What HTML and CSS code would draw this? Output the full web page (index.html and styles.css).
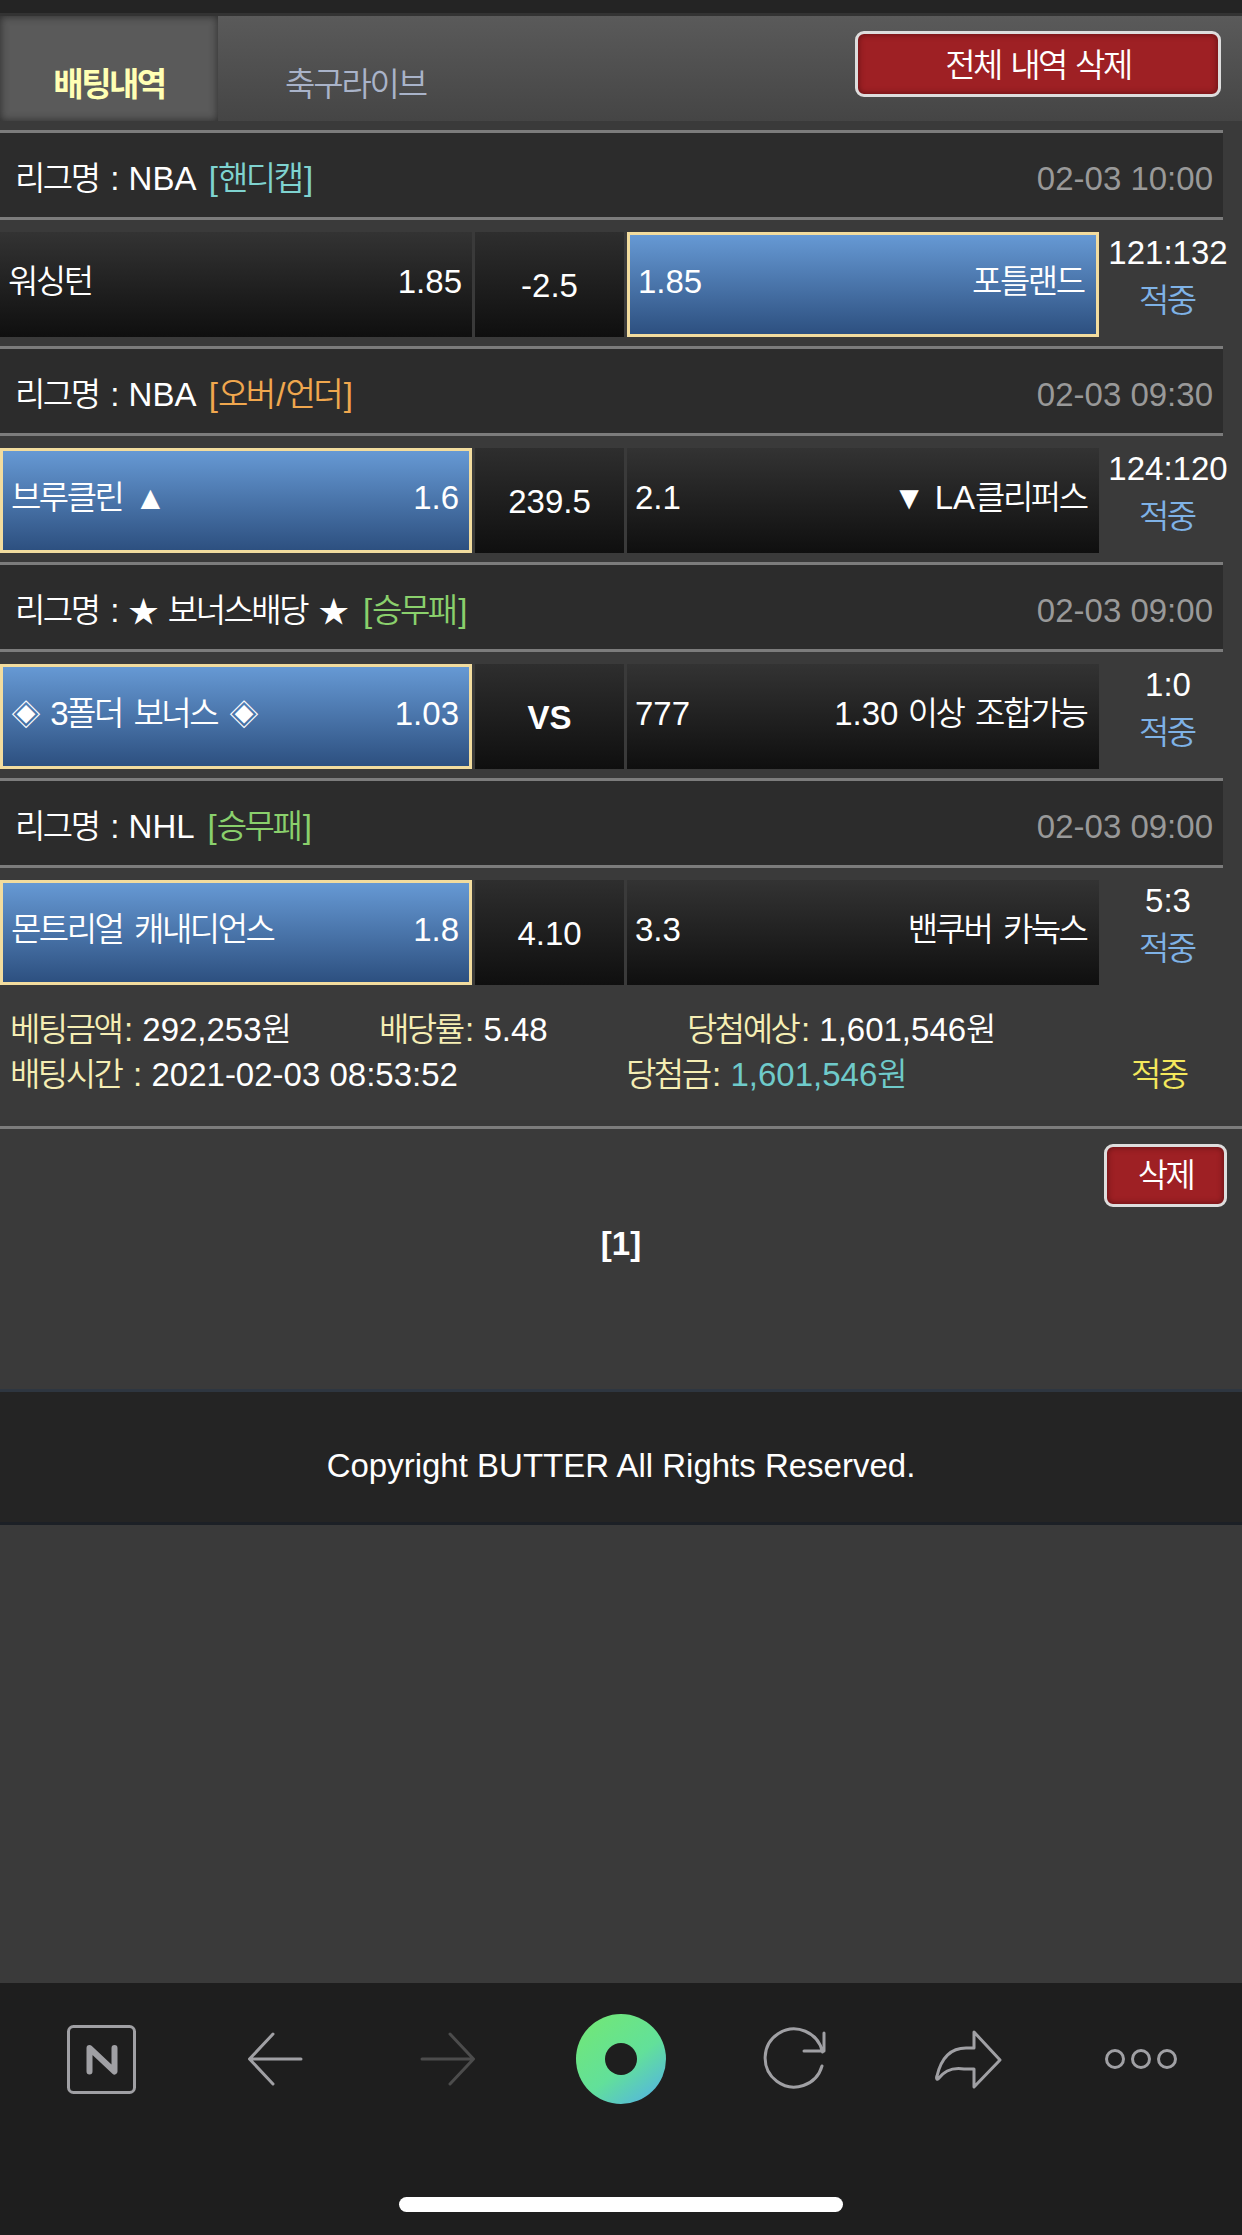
FILE: index.html
```html
<!DOCTYPE html>
<html lang="ko">
<head>
    <meta charset="UTF-8">
    <meta name="viewport" content="width=device-width, initial-scale=1.0">
    <title>배팅내역</title>
    <link rel="stylesheet" href="styles.css">
</head>
<body>

    <div class="top-strip"></div>

    <!-- Tabs -->
    <div class="tab-bar">
        <div class="tab tab-active">배팅내역</div>
        <div class="tab">축구라이브</div>
        <button class="btn-red btn-all">전체 내역 삭제</button>
    </div>

    <!-- Bet 1 -->
    <div class="league">
        <span><span class="ko">리그명</span> : NBA <span class="tag tag-handi">[<span class="ko">핸디캡</span>]</span></span>
        <span class="league-date">02-03 10:00</span>
    </div>
    <div class="match">
        <div class="pick"><span class="ko">워싱턴</span><span>1.85</span></div>
        <div class="mid">-2.5</div>
        <div class="pick pick-on"><span>1.85</span><span class="ko">포틀랜드</span></div>
        <div class="score">121:132<em class="ko">적중</em></div>
    </div>

    <!-- Bet 2 -->
    <div class="league">
        <span><span class="ko">리그명</span> : NBA <span class="tag tag-over">[<span class="ko">오버</span>/<span class="ko">언더</span>]</span></span>
        <span class="league-date">02-03 09:30</span>
    </div>
    <div class="match">
        <div class="pick pick-on"><span><span class="ko">브루클린</span> ▲</span><span>1.6</span></div>
        <div class="mid">239.5</div>
        <div class="pick"><span>2.1</span><span>▼ LA<span class="ko">클리퍼스</span></span></div>
        <div class="score">124:120<em class="ko">적중</em></div>
    </div>

    <!-- Bet 3 -->
    <div class="league">
        <span><span class="ko">리그명</span> : <span class="sym">★</span> <span class="ko">보너스배당</span> <span class="sym">★</span> <span class="tag tag-win">[<span class="ko">승무패</span>]</span></span>
        <span class="league-date">02-03 09:00</span>
    </div>
    <div class="match">
        <div class="pick pick-on"><span><span class="sym">◈</span> <span class="ko">3폴더 보너스</span> <span class="sym">◈</span></span><span>1.03</span></div>
        <div class="mid mid-vs">VS</div>
        <div class="pick"><span>777</span><span>1.30 <span class="ko">이상 조합가능</span></span></div>
        <div class="score">1:0<em class="ko">적중</em></div>
    </div>

    <!-- Bet 4 -->
    <div class="league">
        <span><span class="ko">리그명</span> : NHL <span class="tag tag-win">[<span class="ko">승무패</span>]</span></span>
        <span class="league-date">02-03 09:00</span>
    </div>
    <div class="match">
        <div class="pick pick-on"><span class="ko">몬트리얼 캐내디언스</span><span>1.8</span></div>
        <div class="mid">4.10</div>
        <div class="pick"><span>3.3</span><span class="ko">밴쿠버 카눅스</span></div>
        <div class="score">5:3<em class="ko">적중</em></div>
    </div>

    <!-- Summary -->
    <div class="summary">
        <div class="summary-row">
            <span class="col-a"><i class="ko">베팅금액</i><i>:</i> 292,253<span class="ko">원</span></span>
            <span class="col-b"><i class="ko">배당률</i><i>:</i> 5.48</span>
            <span><i class="ko">당첨예상</i><i>:</i> 1,601,546<span class="ko">원</span></span>
        </div>
        <div class="summary-row">
            <span class="col-c"><i class="ko">배팅시간</i><i> :</i> 2021-02-03 08:53:52</span>
            <span class="col-d"><i class="ko">당첨금</i><i>:</i> <u>1,601,546<span class="ko">원</span></u></span>
            <span class="result ko">적중</span>
        </div>
    </div>

    <div class="actions">
        <button class="btn-red btn-one">삭제</button>
    </div>
    <div class="pager">[1]</div>

    <div class="footer">Copyright BUTTER All Rights Reserved.</div>

    <!-- Browser toolbar -->
    <div class="toolbar">
        <div class="tools">
            <svg class="ico ico-n" viewBox="0 0 69 69"><rect x="1.5" y="1.5" width="66" height="66" rx="5"/><path class="n-mark" d="M22.500 46.500V23L47.500 46.500V23"/></svg>
            <svg class="ico ico-arrow" viewBox="0 0 54 52"><path d="M53 26H2M25 1L1.500 26L25 51"/></svg>
            <svg class="ico ico-arrow ico-off" viewBox="0 0 54 52"><path d="M1 26H52M29 1L52.500 26L29 51"/></svg>
            <svg class="ico-logo" viewBox="0 0 90 90">
                <defs>
                    <linearGradient id="logo-grad" x1="0.2" y1="0.1" x2="0.85" y2="0.95">
                        <stop offset="0" stop-color="#6fe67c"/>
                        <stop offset="0.55" stop-color="#62e09a"/>
                        <stop offset="1" stop-color="#55b8dc"/>
                    </linearGradient>
                </defs>
                <circle cx="45" cy="45" r="45" fill="url(#logo-grad)"/>
                <circle cx="45" cy="45" r="16" fill="#1e1e1e"/>
            </svg>
            <svg class="ico ico-reload" viewBox="0 0 62 62"><path d="M59 38A29 29 0 1 1 59.500 24M61 5V23H41"/></svg>
            <svg class="ico ico-share" viewBox="0 0 66 60"><path d="M39 3L65 31L39 58V40H29C14 38 8 44 3 50C2 51 1 49 2 47C6 30 15 19 31 19H39Z"/></svg>
            <svg class="ico ico-dots" viewBox="0 0 72 22"><circle cx="10" cy="11" r="8.500"/><circle cx="36" cy="11" r="8.500"/><circle cx="62" cy="11" r="8.500"/></svg>
        </div>
        <div class="home-bar"></div>
    </div>

</body>
</html>
```

FILE: styles.css
```css
/* General Styles */
body {
    margin: 0;
    width: 1242px;
    height: 2235px;
    overflow: hidden;
    display: flex;
    flex-direction: column;
    background: #3a3a3a;
    color: #fff;
    font-family: "Liberation Sans", "Noto Sans CJK KR", sans-serif;
    font-size: 33px;
}

/* Hangul runs sit tighter than the fallback font's default advance */
.ko {
    font-weight: 350;
    letter-spacing: -2.5px;
    word-spacing: 5px;
    margin-right: 2.5px;
}

/* Stars and diamonds */
.sym {
    font-size: 30px;
}

.top-strip {
    height: 13px;
    border-bottom: 3px solid #333;
    background: #242424;
}

/* Tabs */
.tab-bar {
    display: flex;
    height: 105px;
    margin-bottom: 9px;
    background: linear-gradient(#5a5a5a, #454545);
}

.tab {
    width: 275px;
    padding-top: 42px;
    box-sizing: border-box;
    text-align: center;
    color: #a9b3c9;
    font-weight: 350;
    letter-spacing: -2.2px;
}

.tab-active {
    width: 218px;
    color: #ffffb4;
    font-weight: bold;
    letter-spacing: -2.5px;
    background: #5a5a5a;
    box-shadow: inset 0 0 8px #2a2a2a;
}

button {
    font-family: inherit;
}

.btn-red {
    box-sizing: border-box;
    padding: 0 0 3px;
    border: 3px solid #ddd;
    border-radius: 9px;
    background: #9e2024;
    box-shadow: inset 0 0 6px #5c0f12;
    color: #fff;
    font-size: 33px;
    font-weight: 350;
    letter-spacing: -2.5px;
    word-spacing: 2.5px;
}

.btn-all {
    width: 366px;
    height: 66px;
    margin: 15px 21px 0 auto;
}

/* League header */
.league {
    display: flex;
    justify-content: space-between;
    align-items: baseline;
    box-sizing: border-box;
    width: 1223px;
    height: 90px;
    padding: 26px 10px 0 15px;
    border-top: 3px solid #7c7c7c;
    border-bottom: 3px solid #7c7c7c;
    background: #2c2c2c;
    line-height: 40px;
}

.league-date {
    color: #999;
}

.tag {
    margin-left: 5px;
}

.tag-handi {
    color: #7fd3d0;
}

.tag-over {
    color: #f0a74e;
}

.tag-win {
    color: #8ad06c;
}

/* Match row */
.match {
    display: flex;
    height: 105px;
    margin: 12px 0 9px;
    line-height: 40px;
}

.pick {
    box-sizing: border-box;
    width: 472px;
    display: flex;
    justify-content: space-between;
    align-items: baseline;
    padding: 30px 10px 0 8px;
    background: linear-gradient(#333, #0f0f0f);
}

.pick-on {
    padding-top: 27px;
    border: 3px solid #f2dc9e;
    background: linear-gradient(#6699d4, #2d5080);
}

.mid {
    width: 149px;
    margin: 0 3px;
    padding-top: 34px;
    box-sizing: border-box;
    text-align: center;
    background: linear-gradient(#2e2e2e, #0f0f0f);
}

.mid-vs {
    font-weight: bold;
}

.score {
    width: 138px;
    margin-top: -3px;
    text-align: center;
    line-height: 48px;
}

.score em {
    display: block;
    font-style: normal;
    color: #7fb2e6;
}

/* Summary */
.summary {
    padding: 13px 0 29px 10px;
    border-bottom: 3px solid #7c7c7c;
    line-height: 45px;
}

.summary-row {
    display: flex;
}

.summary i {
    font-style: normal;
    color: #f5eeb4;
}

.summary u {
    text-decoration: none;
    color: #6fcaca;
}

.col-a {
    width: 369px;
}

.col-b {
    width: 308px;
}

.col-c {
    width: 616px;
}

.col-d {
    width: 505px;
}

.result {
    color: #f4e85c;
}

.actions {
    display: flex;
    justify-content: flex-end;
    padding: 15px 15px 0 0;
}

.btn-one {
    width: 123px;
    height: 63px;
    padding-bottom: 5px;
}

.pager {
    margin-top: 18px;
    text-align: center;
    font-weight: bold;
}

.footer {
    box-sizing: border-box;
    margin-top: 126px;
    height: 136px;
    padding-top: 19px;
    line-height: 110px;
    text-align: center;
    background: #242424;
    border-top: 3px solid #2e3640;
    border-bottom: 3px solid #1c2026;
}

/* Browser toolbar */
.toolbar {
    margin-top: auto;
    height: 252px;
    position: relative;
    background: #1e1e1e;
}

.tools {
    display: grid;
    grid-template-columns: repeat(7, 173.2px);
    justify-items: center;
    align-items: center;
    height: 152px;
    padding-left: 15px;
}

.ico {
    fill: none;
    stroke: #a0a0a4;
    stroke-width: 3;
    stroke-linecap: round;
    stroke-linejoin: round;
    overflow: visible;
}

.ico-n {
    width: 69px;
    height: 69px;
}

.n-mark {
    stroke-width: 6;
}

.ico-arrow {
    width: 54px;
    height: 52px;
}

.ico-off {
    stroke: #4c4c4c;
}

.ico-logo {
    width: 90px;
    height: 90px;
}

.ico-reload {
    width: 62px;
    height: 62px;
}

.ico-share {
    width: 66px;
    height: 60px;
}

.ico-dots {
    width: 72px;
    height: 22px;
}

.home-bar {
    position: absolute;
    left: 399px;
    bottom: 23px;
    width: 444px;
    height: 15px;
    border-radius: 8px;
    background: #fff;
}
```
